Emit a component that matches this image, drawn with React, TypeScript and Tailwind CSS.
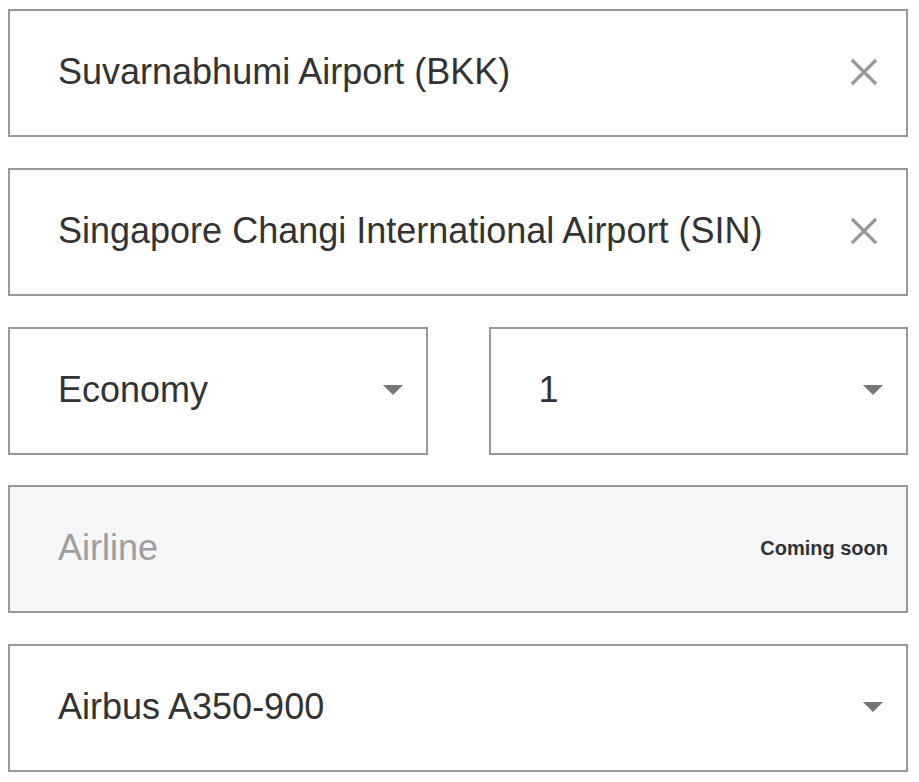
import React from "react";

const Clear = () => (
  <svg width="28" height="28" viewBox="0 0 28 28" className="shrink-0">
    <path d="M2 2 L26 26 M26 2 L2 26" stroke="#999999" strokeWidth="3.2" />
  </svg>
);

const Caret = () => (
  <svg width="20" height="10" viewBox="0 0 20 10" className="shrink-0">
    <path d="M0 0 L20 0 L10 10 Z" fill="#757575" />
  </svg>
);

const box =
  "h-[128px] border-2 border-[#999999] flex items-center pb-[3px] text-[36px] text-[#333333]";

export default function App() {
  return (
    <div
      className="w-[919px] h-[782px] bg-white pl-[8px] pt-[9px]"
      style={{ fontFamily: '"Liberation Sans", Arial, sans-serif' }}
    >
      <div className="w-[900px] flex flex-col">
        <div className={`${box} pl-[48px] pr-[28px] justify-between`}>
          <span>Suvarnabhumi Airport (BKK)</span>
          <Clear />
        </div>
        <div className={`${box} mt-[31px] pl-[48px] pr-[28px] justify-between`}>
          <span>Singapore Changi International Airport (SIN)</span>
          <Clear />
        </div>
        <div className="mt-[31px] grid grid-cols-2 gap-[61px]">
          <div className={`${box} pl-[48px] pr-[23px] justify-between`}>
            <span>Economy</span>
            <Caret />
          </div>
          <div className={`${box} pl-[48px] pr-[23px] justify-between`}>
            <span>1</span>
            <Caret />
          </div>
        </div>
        <div className={`${box} mt-[30px] pl-[48px] pr-[18px] justify-between bg-[#f5f6f8]`}>
          <span className="text-[#9e9e9e]">Airline</span>
          <span className="text-[20px] font-bold text-[#333333]">Coming soon</span>
        </div>
        <div className={`${box} mt-[31px] pl-[48px] pr-[23px] justify-between`}>
          <span>Airbus A350-900</span>
          <Caret />
        </div>
      </div>
    </div>
  );
}
